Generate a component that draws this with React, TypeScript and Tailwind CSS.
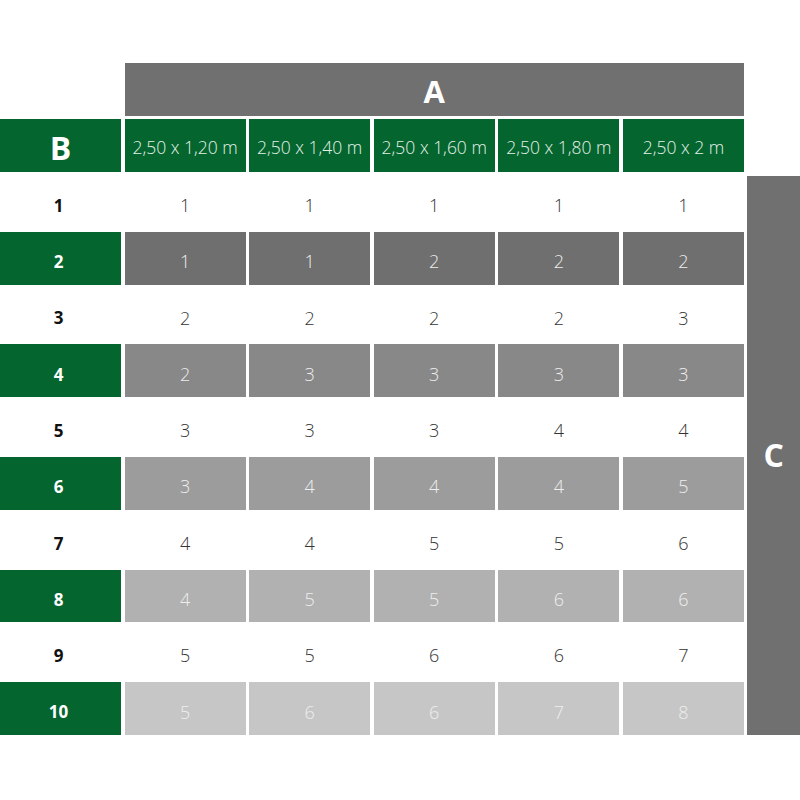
const sizes = ["2,50 x 1,20 m", "2,50 x 1,40 m", "2,50 x 1,60 m", "2,50 x 1,80 m", "2,50 x 2 m"];

const rows: number[][] = [
    [1, 1, 1, 1, 1],
    [1, 1, 2, 2, 2],
    [2, 2, 2, 2, 3],
    [2, 3, 3, 3, 3],
    [3, 3, 3, 4, 4],
    [3, 4, 4, 4, 5],
    [4, 4, 5, 5, 6],
    [4, 5, 5, 6, 6],
    [5, 5, 6, 6, 7],
    [5, 6, 6, 7, 8],
];

// shade for each coloured (even) row
const shades = ["bg-[#6f6f6f]", "bg-[#888888]", "bg-[#9c9c9c]", "bg-[#b1b1b1]", "bg-[#c6c6c6]"];

export default function App() {
    return (
        <section className="min-h-screen w-[800px] bg-white pt-[63px] font-['Open_Sans',sans-serif]">
            <section className="grid grid-cols-[121px_repeat(5,1fr)_52.5px] grid-rows-[repeat(12,52.8px)] gap-[3.5px]">
                <section />
                <section className="col-span-5 bg-[#707070] flex items-center justify-center pt-1 text-white font-bold text-[31px]">A</section>
                <section />

                <section className="bg-[#05652f] flex items-center justify-center pt-1 text-white font-bold text-[32px]">B</section>
                {sizes.map((s) => (
                    <section key={s} className="bg-[#05652f] flex items-center justify-center pt-[3px] text-[#e2f1e7] font-light text-[17.5px]">{s}</section>
                ))}
                <section />

                {rows.map((r, i) => {
                    const coloured = i % 2 === 1;
                    const shade = shades[Math.floor(i / 2)];
                    return [
                        <section key={`l${i}`} className={`flex items-center justify-center pt-[7px] font-bold text-[17px] ${coloured ? "bg-[#05652f] text-white" : "text-[#111]"}`}>
                            <span className="-ml-[4px]">{i + 1}</span>
                        </section>,
                        ...r.map((v, j) => (
                            <section key={`c${i}-${j}`} className={`flex items-center justify-center pt-[7px] font-light text-[18px] ${coloured ? `${shade} text-[#eeeeee]` : "text-[#333]"}`}>
                                {v}
                            </section>
                        )),
                        i === 0 ? (
                            <section key="C" className="row-span-10 bg-[#707070] flex items-center justify-center text-white font-bold text-[32px]">C</section>
                        ) : null,
                    ];
                })}
            </section>
        </section>
    );
}
